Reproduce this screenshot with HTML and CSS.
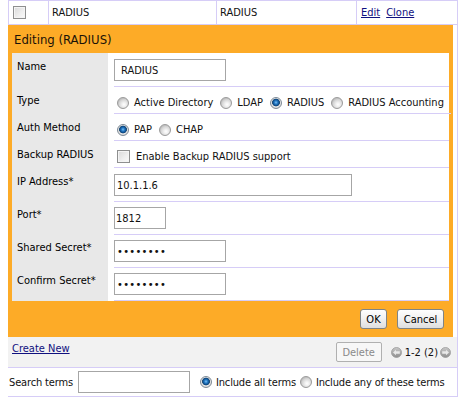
FILE: index.html
```html
<!DOCTYPE html>
<html>
<head>
<meta charset="utf-8">
<title>RADIUS</title>
<link rel="stylesheet" href="styles.css">
</head>
<body>
<div class="list">
  <div class="toprow">
    <div class="c c1"><input type="checkbox" class="cb"></div>
    <div class="c c2">RADIUS</div>
    <div class="c c3">RADIUS</div>
    <div class="c c4"><a href="#">Edit</a><a href="#" class="clone">Clone</a></div>
  </div>

  <div class="editwrap">
    <div class="editor">
      <div class="etitle">Editing (RADIUS)</div>
      <div class="form">
        <div class="fr">
          <div class="lbl">Name</div>
          <div class="val"><input class="txt wname" type="text" value="RADIUS"></div>
        </div>
        <div class="fr opt">
          <div class="lbl">Type</div>
          <div class="val">
            <label class="o"><input type="radio" name="t" class="rd">Active Directory</label>
            <label class="o"><input type="radio" name="t" class="rd">LDAP</label>
            <label class="o"><input type="radio" name="t" class="rd" checked>RADIUS</label>
            <label class="o"><input type="radio" name="t" class="rd">RADIUS Accounting</label>
          </div>
        </div>
        <div class="fr opt">
          <div class="lbl">Auth Method</div>
          <div class="val">
            <label class="o"><input type="radio" name="a" class="rd" checked>PAP</label>
            <label class="o"><input type="radio" name="a" class="rd">CHAP</label>
          </div>
        </div>
        <div class="fr opt">
          <div class="lbl">Backup RADIUS</div>
          <div class="val">
            <label class="o"><input type="checkbox" class="cb cbv">Enable Backup RADIUS support</label>
          </div>
        </div>
        <div class="fr">
          <div class="lbl">IP Address*</div>
          <div class="val"><input class="txt wip" type="text" value="10.1.1.6"></div>
        </div>
        <div class="fr tight">
          <div class="lbl">Port*</div>
          <div class="val"><input class="txt wport" type="text" value="1812"></div>
        </div>
        <div class="fr tight">
          <div class="lbl">Shared Secret*</div>
          <div class="val"><input class="txt wsec" type="password" value="abcdefgh"></div>
        </div>
        <div class="fr tight">
          <div class="lbl">Confirm Secret*</div>
          <div class="val"><input class="txt wsec" type="password" value="abcdefgh"></div>
        </div>
      </div>
      <div class="actions">
        <button class="btn bok">OK</button>
        <button class="btn bcancel">Cancel</button>
      </div>
    </div>
  </div>

  <div class="bar">
    <a href="#" class="create">Create New</a>
    <div class="right">
      <button class="btn del" disabled>Delete</button>
      <div class="pager">
        <svg class="pg" width="11" height="11" viewBox="0 0 11 11"><defs><linearGradient id="g1" x1="0" y1="0" x2="0" y2="1"><stop offset="0" stop-color="#c9c9c9"/><stop offset="1" stop-color="#8e8e8e"/></linearGradient></defs><circle cx="5.5" cy="5.5" r="5" fill="url(#g1)" stroke="#9a9a9a" stroke-width="0.8"/><path d="M2 5.5 L5 2.8 L5 4.3 L8.8 4.3 L8.8 6.7 L5 6.7 L5 8.2 Z" fill="#e9e9e9"/></svg>
        <span class="pgt">1-2 (2)</span>
        <svg class="pg" width="11" height="11" viewBox="0 0 11 11"><defs><linearGradient id="g2" x1="0" y1="0" x2="0" y2="1"><stop offset="0" stop-color="#c9c9c9"/><stop offset="1" stop-color="#8e8e8e"/></linearGradient></defs><circle cx="5.5" cy="5.5" r="5" fill="url(#g2)" stroke="#9a9a9a" stroke-width="0.8"/><path d="M9 5.5 L6 2.8 L6 4.3 L2.2 4.3 L2.2 6.7 L6 6.7 L6 8.2 Z" fill="#e9e9e9"/></svg>
      </div>
    </div>
  </div>

  <div class="search">
    <span class="st">Search terms</span>
    <input class="txt wsearch" type="text" value="">
    <label class="o so"><input type="radio" name="s" class="rd" checked>Include all terms</label>
    <label class="o so"><input type="radio" name="s" class="rd">Include any of these terms</label>
  </div>
</div>
</body>
</html>
```

FILE: styles.css
```css
* { box-sizing: border-box; }

body {
  margin: 0;
  background: #fff;
  color: #111;
  font-family: "DejaVu Sans Condensed", "DejaVu Sans", sans-serif;
  font-size: 11px;
  line-height: 15px;
}

a { color: #10107f; text-decoration: underline; }

.list { margin-left: 8px; width: 450px; }

/* top list row */
.toprow {
  display: grid;
  grid-template-columns: 40px 168px 140px 102px;
  height: 25px;
  border-top: 1px solid #d6cdf7;
  border-bottom: 1px solid #d6cdf7;
}
.c {
  border-left: 1px solid #d6cdf7;
  display: flex;
  align-items: center;
  padding-left: 3px;
}
.c4 { border-right: 1px solid #d6cdf7; padding-left: 4px; }
.c1 { padding-left: 4px; }
.clone { margin-left: 6px; }

/* checkbox */
.cb {
  appearance: none;
  -webkit-appearance: none;
  width: 13px;
  height: 13px;
  margin: 0;
  border: 1px solid #8e8f8f;
  background: linear-gradient(135deg, #d9d9d9 0%, #efefef 60%, #fafafa 100%);
  box-shadow: inset 0 0 0 1px #f4f4f4;
  flex: none;
}

/* radio */
.rd {
  appearance: none;
  -webkit-appearance: none;
  width: 12px;
  height: 12px;
  margin: 0 5px 0 0;
  border-radius: 50%;
  border: 1px solid #9a9a9a;
  background: radial-gradient(circle at 60% 65%, #ffffff 0, #f1f1f1 2px, #d4d4d4 5px, #c2c2c2 6px);
  flex: none;
}
.rd:checked {
  border-color: #7d8a96;
  background: radial-gradient(circle at 50% 45%, #7fc3f5 0, #2a7fc9 1.5px, #0d4f8f 3px, #1c4a74 3.6px, #e9e9e9 4.2px, #d0d0d0 6px);
}

/* editor panel */
.editwrap {
  display: flex;
  border-right: 1px solid #d6cdf7;
  padding-right: 4px;
}
.editor {
  width: 445px;
  background: #fdab27;
  padding: 0 4px 8px;
}
.etitle {
  height: 28px;
  line-height: 30px;
  padding-left: 2px;
  font-size: 13px;
  color: #1a1208;
}
.form { background: #fff; }

.fr {
  display: grid;
  grid-template-columns: 96px 1fr;
  column-gap: 6px;
}
.lbl {
  background: #e8e8e8;
  padding: 6px 5px 0;
  color: #000;
  white-space: nowrap;
}
.val {
  border-bottom: 1px solid #d6cdf7;
  padding: 6px 0 5px;
}
.fr.opt .lbl { padding-top: 6px; }
.fr.opt .val {
  padding: 8px 0 3px;
  line-height: 15px;
  display: flex;
  align-items: center;
  height: 27px;
}
.fr.tight .lbl { padding-top: 5px; }
.fr.tight .val { padding: 5px 0 5px; }

.o {
  display: inline-flex;
  align-items: center;
  margin-right: 7px;
  white-space: nowrap;
}
.o:first-child { margin-left: 3px; }
.cbv { margin-right: 6px; }

.txt {
  display: block;
  height: 22px;
  border: 1px solid #a6a6a6;
  font: inherit;
  color: #111;
  padding: 0 2px;
  margin: 0;
  background: #fff;
}
.wname { width: 112px; padding-left: 6px; }
.wip { width: 238px; }
.wport { width: 52px; padding-left: 1px; }
.wsec { width: 112px; letter-spacing: 0.3px; }

.actions {
  display: flex;
  justify-content: flex-end;
  gap: 10px;
  padding: 8px 5px 0 0;
}
.btn {
  height: 20px;
  font: inherit;
  color: #000;
  border: 1px solid #7f8486;
  border-radius: 3px;
  background: linear-gradient(#fefefe 0%, #f2f2f2 45%, #dedede 100%);
  padding: 0 5px;
  margin: 0;
}
.bok { width: 27px; padding: 0; }
.bcancel { width: 47px; padding: 0; }

/* bottom bar */
.bar {
  display: flex;
  justify-content: space-between;
  align-items: center;
  height: 31px;
  background: #f2f2f2;
  border-right: 1px solid #d6cdf7;
  border-bottom: 1px solid #d6cdf7;
  padding: 0 6px 0 4px;
}
.create { align-self: flex-start; padding-top: 4px; }
.right { display: flex; align-items: center; }
.del {
  width: 46px;
  color: #8a8a8a;
  border-color: #b0b0b0;
  border-radius: 2px;
  background: #f7f7f7;
  padding: 0;
  margin-right: 9px;
}
.pager { display: flex; align-items: center; }
.pg { display: block; }
.pgt { margin: 0 2px 0 3px; }

/* search row */
.search {
  display: flex;
  align-items: center;
  height: 29px;
  border-right: 1px solid #d6cdf7;
  border-bottom: 1px solid #d6cdf7;
  padding-left: 1px;
  white-space: nowrap;
  letter-spacing: -0.15px;
}
.st { margin-right: 5px; flex: none; }
.wsearch { width: 112px; margin-right: 10px; flex: none; }
.so { margin-right: 4px; }
.so .rd { margin-right: 4px; }
.so:first-of-type { margin-left: 0; }
```
